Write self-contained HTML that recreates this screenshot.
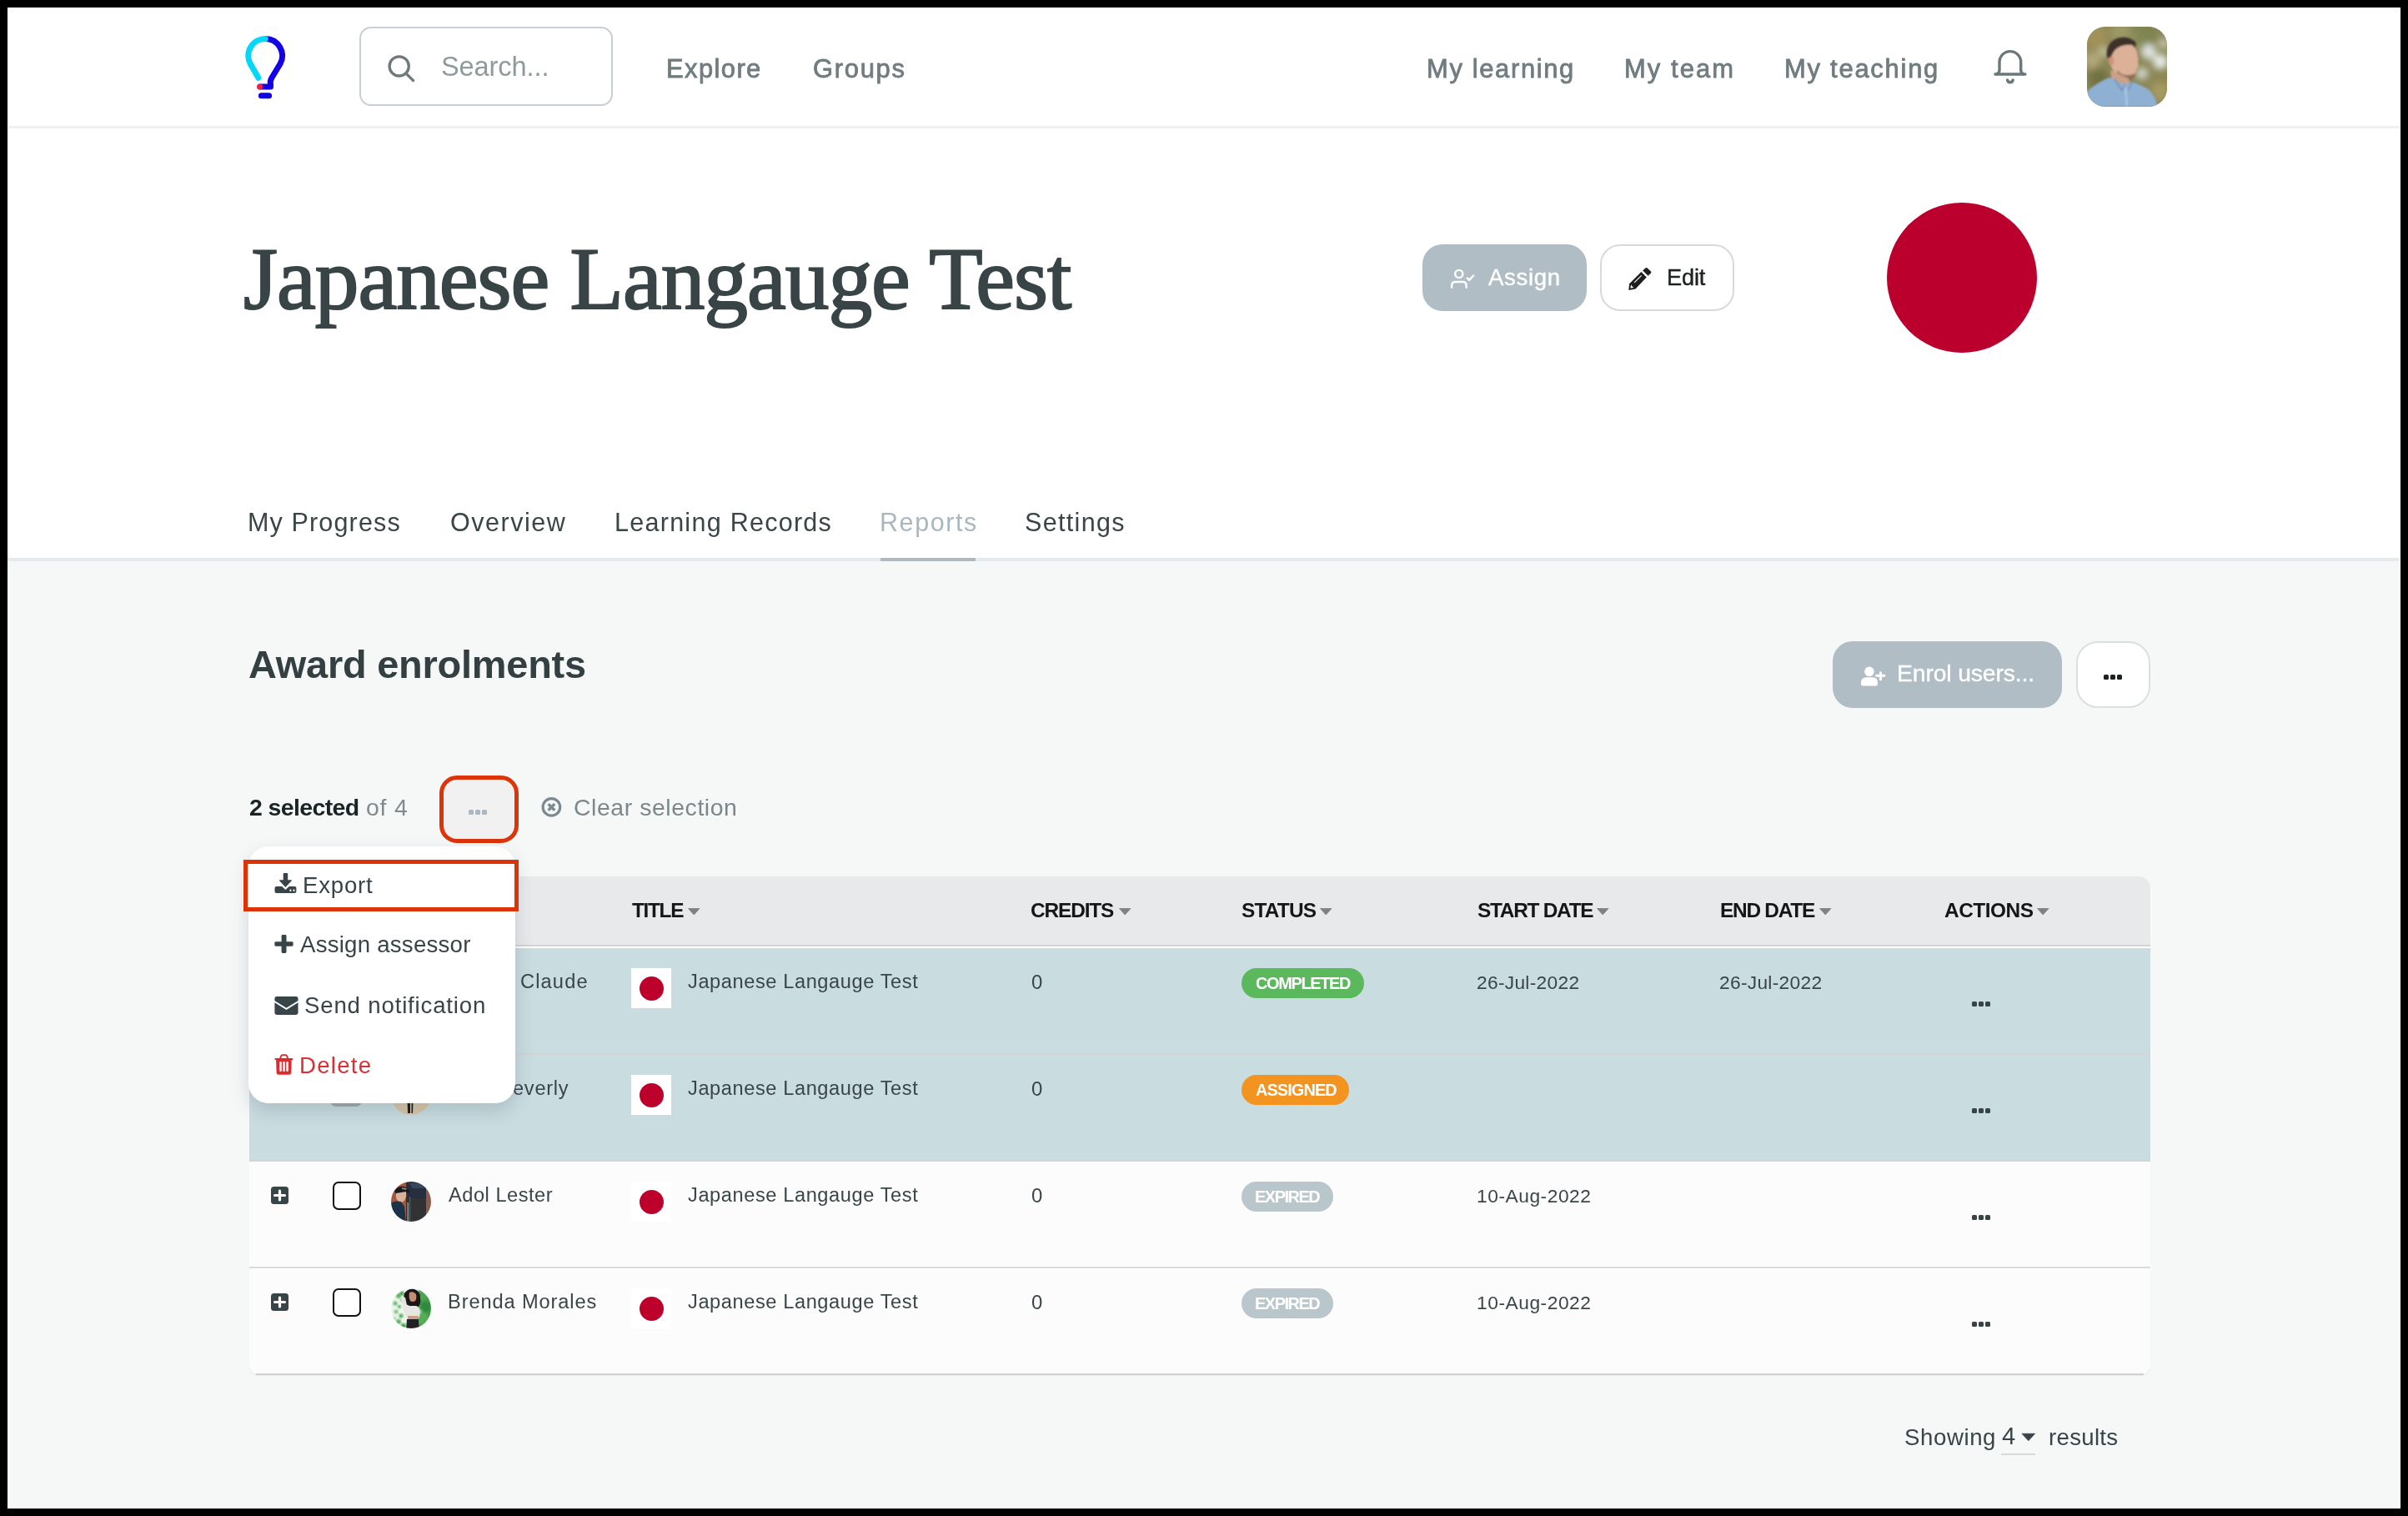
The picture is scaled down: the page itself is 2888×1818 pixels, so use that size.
<!DOCTYPE html>
<html><head><meta charset="utf-8"><title>Japanese Langauge Test - Reports</title>
<style>
html,body{margin:0;padding:0}
body{width:2888px;height:1818px;background:#000;position:relative;overflow:hidden;font-family:'Liberation Sans',sans-serif}
.t{position:absolute;white-space:nowrap;will-change:transform}

</style></head><body>
<div style="position:absolute;left:9px;top:9px;width:2870px;height:1800px;background:#fff"></div>
<div style="position:absolute;left:9px;top:151px;width:2869px;height:3px;background:#eff0f2"></div>
<div style="position:absolute;left:9px;top:669px;width:2869px;height:4px;background:#e4eaed"></div>
<div style="position:absolute;left:9px;top:673px;width:2869px;height:1135px;background:#f6f8f8"></div>
<div style="position:absolute;left:1056px;top:669px;width:114px;height:4px;background:#adbac2"></div>
<svg style="position:absolute;left:284px;top:36px" width="68" height="90" viewBox="0 0 68 90">
<path d="M34.15 10.5 A20.35 20.35 0 0 1 52.07 40.5 L41.8 57.5 Q39.6 61.5 40.5 65 L40.5 68 L28 68" fill="none" stroke="#1400e6" stroke-width="7" stroke-linecap="round" stroke-linejoin="round"/>
<path d="M25.8 57.3 L16.47 40.93 A20.35 20.35 0 0 1 34.15 10.5" fill="none" stroke="#03d7fa" stroke-width="7" stroke-linecap="round"/>
<circle cx="27.6" cy="68.1" r="3.5" fill="#ee2244"/>
<path d="M29.4 78.65 L38.6 78.65" stroke="#1400e6" stroke-width="7" stroke-linecap="round"/>
</svg>
<div style="position:absolute;left:431px;top:32px;width:300px;height:91px;border:2px solid #c9cfd2;border-radius:14px;background:#fff"></div>
<svg style="position:absolute;left:460px;top:60px" width="44" height="44" viewBox="0 0 44 44">
<circle cx="18.7" cy="19.4" r="11.6" fill="none" stroke="#6d797d" stroke-width="3.3"/>
<path d="M27.3 28.3 L35.6 36.6" stroke="#6d797d" stroke-width="3.3" stroke-linecap="round"/></svg>
<div class=t style="left:529.00px;top:64.01px;font:400 32.59px/32.59px 'Liberation Sans',sans-serif;letter-spacing:-0.116px;color:#8f9a9d;">Search...</div>
<div class=t style="left:798.70px;top:67.81px;font:400 30.93px/30.93px 'Liberation Sans',sans-serif;letter-spacing:1.409px;color:#707c80;-webkit-text-stroke:0.8px #707c80">Explore</div>
<div class=t style="left:975.00px;top:67.81px;font:400 30.93px/30.93px 'Liberation Sans',sans-serif;letter-spacing:1.712px;color:#707c80;-webkit-text-stroke:0.8px #707c80">Groups</div>
<div class=t style="left:1711.00px;top:67.81px;font:400 30.93px/30.93px 'Liberation Sans',sans-serif;letter-spacing:1.646px;color:#707c80;-webkit-text-stroke:0.8px #707c80">My learning</div>
<div class=t style="left:1948.30px;top:67.81px;font:400 30.93px/30.93px 'Liberation Sans',sans-serif;letter-spacing:2.067px;color:#707c80;-webkit-text-stroke:0.8px #707c80">My team</div>
<div class=t style="left:2139.70px;top:67.81px;font:400 30.93px/30.93px 'Liberation Sans',sans-serif;letter-spacing:1.758px;color:#707c80;-webkit-text-stroke:0.8px #707c80">My teaching</div>
<svg style="position:absolute;left:2380px;top:50px" width="60" height="60" viewBox="0 0 60 60">
<path d="M14.5 39 Q18 38 18 34 L18 24.5 A12.85 12.85 0 0 1 43.7 24.5 L43.7 34 Q43.7 38 47.2 39" fill="none" stroke="#6b777b" stroke-width="3.4" stroke-linejoin="round"/>
<path d="M12.9 39 L48.9 39" stroke="#6b777b" stroke-width="3.4" stroke-linecap="round"/>
<path d="M27.5 45.9 A3.4 3.4 0 0 0 34.2 45.9" fill="none" stroke="#6b777b" stroke-width="3.4" stroke-linecap="round"/></svg>
<svg style="position:absolute;left:2503px;top:32px" width="96" height="96" viewBox="0 0 96 96">
<defs><clipPath id="av"><rect width="96" height="96" rx="22"/></clipPath>
<filter id="bl" x="-20%" y="-20%" width="140%" height="140%"><feGaussianBlur stdDeviation="4"/></filter>
<filter id="bl2"><feGaussianBlur stdDeviation="0.8"/></filter></defs>
<g clip-path="url(#av)">
<rect width="96" height="96" fill="#8b8656"/>
<g filter="url(#bl)">
<circle cx="10" cy="12" r="14" fill="#a2925a"/><circle cx="40" cy="6" r="12" fill="#9c9a66"/><circle cx="70" cy="10" r="14" fill="#7f8450"/>
<circle cx="6" cy="40" r="10" fill="#b4a878"/><circle cx="14" cy="62" r="12" fill="#6f7242"/><circle cx="20" cy="30" r="6" fill="#c9c4a0"/>
<circle cx="74" cy="30" r="9" fill="#dfe6e4"/><circle cx="88" cy="42" r="9" fill="#e9eeee"/><circle cx="66" cy="56" r="7" fill="#d4dcd6"/><circle cx="92" cy="20" r="6" fill="#c8cdb8"/>
<circle cx="88" cy="78" r="12" fill="#a69a62"/><circle cx="76" cy="90" r="8" fill="#8f8a58"/><circle cx="56" cy="14" r="8" fill="#8a8c5c"/>
</g>
<g filter="url(#bl2)">
<path d="M24 36 Q22 20 36 14 Q48 10 58 18 Q60 24 56 26 Q46 22 40 28 Q34 36 30 44 Z" fill="#3e3129"/>
<path d="M32 30 Q40 20 54 22 Q60 26 61 36 Q62 40 61 44 Q63 48 60 50 Q58 56 56 60 Q50 64 42 62 Q34 58 30 50 Q27 44 28 38 Z" fill="#ddb198"/>
<ellipse cx="29" cy="41" rx="3.5" ry="5" fill="#d0927a"/>
<path d="M36 52 Q44 62 58 56 L56 62 Q48 66 40 62 Q36 58 36 52 Z" fill="#8e6c56"/>
<path d="M28 52 L50 62 L52 70 L30 68 Z" fill="#caa08a"/>
<path d="M0 78 Q8 70 24 62 Q30 60 34 64 Q44 72 54 66 Q64 70 72 74 Q80 80 84 92 L84 96 L0 96 Z" fill="#8eb0d3"/>
<path d="M33 63 L42 76 L46 70 M54 66 L50 76" fill="none" stroke="#6f90b6" stroke-width="1.6"/>
<path d="M46 72 L48 96" stroke="#c6d8ea" stroke-width="1.2"/>
</g>
</g></svg>
<div class=t style="left:292.00px;top:282.39px;font:400 105.34px/105.34px 'Liberation Serif',serif;letter-spacing:-1.006px;color:#384446;-webkit-text-stroke:2px #384446">Japanese Langauge Test</div>
<div style="position:absolute;left:1706px;top:293px;width:197px;height:80px;border-radius:24px;background:#b0bdc5"></div>
<svg style="position:absolute;left:1730px;top:312px" width="50" height="40" viewBox="0 0 50 40">
<circle cx="19.8" cy="16.5" r="4.6" fill="none" stroke="#fff" stroke-width="2.4"/>
<path d="M11.1 33.8 L11.1 30.5 Q11.1 26 15.6 26 L24.1 26 Q28.6 26 28.6 30.5 L28.6 33.8" fill="none" stroke="#fff" stroke-width="2.4"/>
<path d="M29.6 21.4 L32.1 23.9 L37.1 18.5" fill="none" stroke="#fff" stroke-width="2.4" stroke-linecap="round" stroke-linejoin="round"/></svg>
<div class=t style="left:1784.50px;top:318.71px;font:400 27.62px/27.62px 'Liberation Sans',sans-serif;letter-spacing:0.637px;color:#fff;-webkit-text-stroke:0.4px #fff">Assign</div>
<div style="position:absolute;left:1919px;top:293px;width:157px;height:76px;border:2px solid #d7dadc;border-radius:24px;background:#fff"></div>
<svg style="position:absolute;left:1945px;top:312px" width="45" height="45" viewBox="0 0 45 45">
<path d="M23.4 14.1 L29.8 20.5 L16.5 34.6 L8.3 36 L9.2 28.2 Z" fill="#1f1f1f"/>
<path d="M25.2 12.5 L28.7 9.3 Q29.7 8.6 30.7 9.4 L35 13.6 Q35.8 14.5 35 15.5 L31.6 18.8 Z" fill="#1f1f1f"/>
<path d="M15.1 26.9 L23.6 18.3" stroke="#fff" stroke-width="1.2"/>
<path d="M11.2 29.3 L10.4 33.6 L14.6 33 Q13.2 32.6 12.8 31.6 Q12 31.2 11.2 29.3 Z" fill="#fff"/></svg>
<div class=t style="left:1999.00px;top:318.97px;font:400 27.2px/27.2px 'Liberation Sans',sans-serif;letter-spacing:-0.165px;color:#1f2223;-webkit-text-stroke:0.4px #1f2223">Edit</div>
<div style="position:absolute;left:2263px;top:243px;width:180px;height:180px;border-radius:50%;background:#bc002d"></div>
<div class=t style="left:297.40px;top:610.76px;font:400 30.52px/30.52px 'Liberation Sans',sans-serif;letter-spacing:1.139px;color:#3a4548;">My Progress</div>
<div class=t style="left:540.20px;top:610.76px;font:400 30.52px/30.52px 'Liberation Sans',sans-serif;letter-spacing:1.523px;color:#3a4548;">Overview</div>
<div class=t style="left:737.00px;top:610.76px;font:400 30.52px/30.52px 'Liberation Sans',sans-serif;letter-spacing:1.265px;color:#3a4548;">Learning Records</div>
<div class=t style="left:1054.60px;top:610.76px;font:400 30.52px/30.52px 'Liberation Sans',sans-serif;letter-spacing:1.585px;color:#a9b7be;">Reports</div>
<div class=t style="left:1229.20px;top:610.76px;font:400 30.52px/30.52px 'Liberation Sans',sans-serif;letter-spacing:1.314px;color:#3a4548;">Settings</div>
<div class=t style="left:297.80px;top:774.15px;font:700 46.95px/46.95px 'Liberation Sans',sans-serif;letter-spacing:-0.236px;color:#343f42;">Award enrolments</div>
<div style="position:absolute;left:2198px;top:769px;width:275px;height:80px;border-radius:24px;background:#b0bdc5"></div>
<svg style="position:absolute;left:2225px;top:790px" width="45" height="40" viewBox="0 0 45 40">
<circle cx="16.9" cy="15.3" r="5.8" fill="#fff"/>
<path d="M7 30.5 L7 28.5 Q7 22.2 13.5 22.2 L20.5 22.2 Q26.9 22.2 26.9 28.5 L26.9 30.5 Q26.9 32.5 24.9 32.5 L9 32.5 Q7 32.5 7 30.5 Z" fill="#fff"/>
<path d="M30.5 16.7 L30.5 24.9 M25.5 20.3 L35 20.3" stroke="#fff" stroke-width="2.9" stroke-linecap="round"/></svg>
<div class=t style="left:2275.30px;top:793.23px;font:400 28.31px/28.31px 'Liberation Sans',sans-serif;letter-spacing:-0.118px;color:#fff;-webkit-text-stroke:0.4px #fff">Enrol users...</div>
<div style="position:absolute;left:2490px;top:769px;width:85px;height:76px;border:2px solid #dcdfe0;border-radius:26px;background:#fff"></div>
<div style="position:absolute;left:2523px;top:809.2px;width:6px;height:6px;border-radius:1.5px;background:#1f2223"></div><div style="position:absolute;left:2531px;top:809.2px;width:6px;height:6px;border-radius:1.5px;background:#1f2223"></div><div style="position:absolute;left:2539px;top:809.2px;width:6px;height:6px;border-radius:1.5px;background:#1f2223"></div>
<div class=t style="left:299.30px;top:954.12px;font:700 28.44px/28.44px 'Liberation Sans',sans-serif;letter-spacing:-0.596px;color:#1a2326;">2 selected</div>
<div class=t style="left:438.60px;top:954.12px;font:400 28.44px/28.44px 'Liberation Sans',sans-serif;letter-spacing:0.761px;color:#7f8b8f;">of 4</div>
<div style="position:absolute;left:527px;top:930px;width:85px;height:71px;border:5px solid #dd3409;border-radius:21px;background:#f1f1f1"></div>
<div style="position:absolute;left:561.5px;top:970.8px;width:6px;height:6px;border-radius:1.5px;background:#a9b9c2"></div><div style="position:absolute;left:569.5px;top:970.8px;width:6px;height:6px;border-radius:1.5px;background:#a9b9c2"></div><div style="position:absolute;left:577.5px;top:970.8px;width:6px;height:6px;border-radius:1.5px;background:#a9b9c2"></div>
<svg style="position:absolute;left:645px;top:952px" width="32" height="32" viewBox="0 0 32 32">
<circle cx="16.4" cy="15.9" r="10.3" fill="none" stroke="#7a8a93" stroke-width="3.2"/>
<path d="M12.6 12.1 L20.2 19.7 M20.2 12.1 L12.6 19.7" stroke="#7a8a93" stroke-width="3.4"/></svg>
<div class=t style="left:688.40px;top:954.12px;font:400 28.44px/28.44px 'Liberation Sans',sans-serif;letter-spacing:0.559px;color:#7b878b;">Clear selection</div>
<div style="position:absolute;left:299px;top:1051px;width:2280px;height:82px;background:#e8e9eb;border-radius:14px 14px 0 0"></div>
<div style="position:absolute;left:299px;top:1133px;width:2280px;height:2px;background:#d3d4d5"></div>
<div style="position:absolute;left:299px;top:1135px;width:2280px;height:2px;background:#fff"></div>
<div style="position:absolute;left:299px;top:1137px;width:2280px;height:126px;background:#c9dce0;"></div>
<div style="position:absolute;left:299px;top:1263px;width:2280px;height:2px;background:#d2d4d5"></div>
<div style="position:absolute;left:299px;top:1265px;width:2280px;height:126px;background:#c9dce0;"></div>
<div style="position:absolute;left:299px;top:1391px;width:2280px;height:2px;background:#d2d4d5"></div>
<div style="position:absolute;left:299px;top:1393px;width:2280px;height:126px;background:#fcfcfc;"></div>
<div style="position:absolute;left:299px;top:1519px;width:2280px;height:2px;background:#d9dcde"></div>
<div style="position:absolute;left:299px;top:1521px;width:2280px;height:126px;background:#fcfcfc;border-radius:0 0 12px 12px;"></div>
<div style="position:absolute;left:307px;top:1647px;width:2264px;height:2px;background:#d0d1d2"></div>
<div style="position:absolute;left:299px;top:1639px;width:2280px;height:10px;border-radius:0 0 12px 12px;box-shadow:0 1px 1px rgba(0,0,0,0.06)"></div>
<div class=t style="left:757.50px;top:1080.12px;font:700 24.42px/24.42px 'Liberation Sans',sans-serif;letter-spacing:-1.326px;color:#141617;">TITLE</div>
<svg style="position:absolute;left:825px;top:1089px" width="15" height="9" viewBox="0 0 15 9"><path d="M0.5 0.5 L14 0.5 L7.25 8 Z" fill="#808080" stroke="#808080" stroke-width="0.8" stroke-linejoin="round"/></svg>
<div class=t style="left:1236.40px;top:1080.12px;font:700 24.42px/24.42px 'Liberation Sans',sans-serif;letter-spacing:-1.124px;color:#141617;">CREDITS</div>
<svg style="position:absolute;left:1341.5px;top:1089px" width="15" height="9" viewBox="0 0 15 9"><path d="M0.5 0.5 L14 0.5 L7.25 8 Z" fill="#808080" stroke="#808080" stroke-width="0.8" stroke-linejoin="round"/></svg>
<div class=t style="left:1489.40px;top:1080.12px;font:700 24.42px/24.42px 'Liberation Sans',sans-serif;letter-spacing:-0.784px;color:#141617;">STATUS</div>
<svg style="position:absolute;left:1582.5px;top:1089px" width="15" height="9" viewBox="0 0 15 9"><path d="M0.5 0.5 L14 0.5 L7.25 8 Z" fill="#808080" stroke="#808080" stroke-width="0.8" stroke-linejoin="round"/></svg>
<div class=t style="left:1771.50px;top:1080.12px;font:700 24.42px/24.42px 'Liberation Sans',sans-serif;letter-spacing:-1.262px;color:#141617;">START DATE</div>
<svg style="position:absolute;left:1914.5px;top:1089px" width="15" height="9" viewBox="0 0 15 9"><path d="M0.5 0.5 L14 0.5 L7.25 8 Z" fill="#808080" stroke="#808080" stroke-width="0.8" stroke-linejoin="round"/></svg>
<div class=t style="left:2062.80px;top:1080.12px;font:700 24.42px/24.42px 'Liberation Sans',sans-serif;letter-spacing:-1.237px;color:#141617;">END DATE</div>
<svg style="position:absolute;left:2181.5px;top:1089px" width="15" height="9" viewBox="0 0 15 9"><path d="M0.5 0.5 L14 0.5 L7.25 8 Z" fill="#808080" stroke="#808080" stroke-width="0.8" stroke-linejoin="round"/></svg>
<div class=t style="left:2331.50px;top:1080.12px;font:700 24.42px/24.42px 'Liberation Sans',sans-serif;letter-spacing:-0.475px;color:#141617;">ACTIONS</div>
<svg style="position:absolute;left:2443px;top:1089px" width="15" height="9" viewBox="0 0 15 9"><path d="M0.5 0.5 L14 0.5 L7.25 8 Z" fill="#808080" stroke="#808080" stroke-width="0.8" stroke-linejoin="round"/></svg>
<svg style="position:absolute;left:325px;top:1167px" width="21" height="21" viewBox="0 0 21 21"><rect width="21" height="21" rx="3.5" fill="#384548"/><path d="M10.5 5 L10.5 16 M4.5 10.5 L16.5 10.5" stroke="#fff" stroke-width="3.2" stroke-linecap="round"/></svg>
<div style="position:absolute;left:396px;top:1164.5px;width:38px;height:34px;border-radius:7px;background:#a0acb3"></div>
<div style="position:absolute;left:469px;top:1160.5px;width:48px;height:48px;border-radius:50%;background:#c9b79e"></div>
<div class=t style="left:624.00px;top:1166.31px;font:400 23.61px/23.61px 'Liberation Sans',sans-serif;letter-spacing:1.143px;color:#3a4548;">Claude</div>
<div style="position:absolute;left:757px;top:1161px;width:48px;height:48px;background:#fff"></div>
<div style="position:absolute;left:766.5px;top:1170.5px;width:29px;height:29px;border-radius:50%;background:#bd002b"></div>
<div class=t style="left:825.20px;top:1166.31px;font:400 23.61px/23.61px 'Liberation Sans',sans-serif;letter-spacing:0.586px;color:#3a4548;">Japanese Langauge Test</div>
<div class=t style="left:1237.40px;top:1166.00px;font:400 23.98px/23.98px 'Liberation Sans',sans-serif;letter-spacing:0.000px;color:#3a4548;">0</div>
<div style="position:absolute;left:1489px;top:1161px;width:147px;height:36px;border-radius:18px;background:#5cb85c"></div>
<div class=t style="left:1505.60px;top:1170.14px;font:700 19.91px/19.91px 'Liberation Sans',sans-serif;letter-spacing:-1.324px;color:#fff;">COMPLETED</div>
<div class=t style="left:1770.50px;top:1167.01px;font:400 22.78px/22.78px 'Liberation Sans',sans-serif;letter-spacing:0.283px;color:#3a4548;">26-Jul-2022</div>
<div class=t style="left:2061.60px;top:1167.01px;font:400 22.78px/22.78px 'Liberation Sans',sans-serif;letter-spacing:0.283px;color:#3a4548;">26-Jul-2022</div>
<div style="position:absolute;left:2365px;top:1201.2px;width:5.8px;height:5.8px;border-radius:1.5px;background:#384346"></div><div style="position:absolute;left:2373px;top:1201.2px;width:5.8px;height:5.8px;border-radius:1.5px;background:#384346"></div><div style="position:absolute;left:2381px;top:1201.2px;width:5.8px;height:5.8px;border-radius:1.5px;background:#384346"></div>
<svg style="position:absolute;left:325px;top:1295px" width="21" height="21" viewBox="0 0 21 21"><rect width="21" height="21" rx="3.5" fill="#384548"/><path d="M10.5 5 L10.5 16 M4.5 10.5 L16.5 10.5" stroke="#fff" stroke-width="3.2" stroke-linecap="round"/></svg>
<div style="position:absolute;left:396px;top:1292.5px;width:38px;height:34px;border-radius:7px;background:#a0acb3"></div>
<svg style="position:absolute;left:469px;top:1288.5px" width="48" height="48" viewBox="0 0 48 48"><defs><clipPath id="c1"><circle cx="24" cy="24" r="24"/></clipPath></defs><g clip-path="url(#c1)">
<rect width="48" height="48" fill="#d8c6ab"/><path d="M19 14 L27 14 L26 46 L20 46 Z" fill="#1e1e1e"/><rect x="23" y="30" width="1.5" height="16" fill="#d8c6ab"/></g></svg>
<div class=t style="left:615.00px;top:1294.31px;font:400 23.61px/23.61px 'Liberation Sans',sans-serif;letter-spacing:0.725px;color:#3a4548;">everly</div>
<div style="position:absolute;left:757px;top:1289px;width:48px;height:48px;background:#fff"></div>
<div style="position:absolute;left:766.5px;top:1298.5px;width:29px;height:29px;border-radius:50%;background:#bd002b"></div>
<div class=t style="left:825.20px;top:1294.31px;font:400 23.61px/23.61px 'Liberation Sans',sans-serif;letter-spacing:0.586px;color:#3a4548;">Japanese Langauge Test</div>
<div class=t style="left:1237.40px;top:1294.00px;font:400 23.98px/23.98px 'Liberation Sans',sans-serif;letter-spacing:0.000px;color:#3a4548;">0</div>
<div style="position:absolute;left:1489px;top:1289px;width:128.5px;height:36px;border-radius:18px;background:#f39420"></div>
<div class=t style="left:1505.60px;top:1298.14px;font:700 19.91px/19.91px 'Liberation Sans',sans-serif;letter-spacing:-0.900px;color:#fff;">ASSIGNED</div>
<div style="position:absolute;left:2365px;top:1329.2px;width:5.8px;height:5.8px;border-radius:1.5px;background:#384346"></div><div style="position:absolute;left:2373px;top:1329.2px;width:5.8px;height:5.8px;border-radius:1.5px;background:#384346"></div><div style="position:absolute;left:2381px;top:1329.2px;width:5.8px;height:5.8px;border-radius:1.5px;background:#384346"></div>
<svg style="position:absolute;left:325px;top:1423px" width="21" height="21" viewBox="0 0 21 21"><rect width="21" height="21" rx="3.5" fill="#384548"/><path d="M10.5 5 L10.5 16 M4.5 10.5 L16.5 10.5" stroke="#fff" stroke-width="3.2" stroke-linecap="round"/></svg>
<div style="position:absolute;left:399px;top:1417px;width:30px;height:30px;border:2px solid #111;border-radius:7px;background:#fff"></div>
<svg style="position:absolute;left:469px;top:1416.5px" width="48" height="48" viewBox="0 0 48 48"><defs><clipPath id="c2"><circle cx="24" cy="24" r="24"/></clipPath><filter id="b2"><feGaussianBlur stdDeviation="0.7"/></filter></defs><g clip-path="url(#c2)"><g filter="url(#b2)">
<rect x="-2" y="-2" width="52" height="52" fill="#a2583c"/><rect x="40" y="-2" width="10" height="52" fill="#8e5a4a"/>
<path d="M18 -2 L42 -2 L42 50 L18 50 Z" fill="#303236"/><path d="M18 -2 L42 -2 L42 20 L20 20 Z" fill="#262f40"/><path d="M22 2 L36 2 L40 8 L26 8 Z" fill="#34465a"/>
<rect x="19.5" y="25" width="1.6" height="25" fill="#8a989c"/><rect x="22" y="18" width="1.2" height="30" fill="#3a6a78"/>
<path d="M4 11 Q8 5 16 6 Q22 8 22 13 L6 15 Z" fill="#151b24"/><path d="M13 7 L19 8 L18 10 L13 9 Z" fill="#8a8060"/>
<path d="M6 14 L18 12 Q19 17 17 21 Q15 25 11 25 Q7 23 6 19 Z" fill="#d6b39a"/>
<path d="M-2 27 Q4 22 12 24 L16 30 L18 50 L-2 50 Z" fill="#1c3149"/>
</g></g></svg>
<div class=t style="left:537.50px;top:1422.31px;font:400 23.61px/23.61px 'Liberation Sans',sans-serif;letter-spacing:0.513px;color:#3a4548;">Adol Lester</div>
<div style="position:absolute;left:757px;top:1417px;width:48px;height:48px;background:#fff"></div>
<div style="position:absolute;left:766.5px;top:1426.5px;width:29px;height:29px;border-radius:50%;background:#bd002b"></div>
<div class=t style="left:825.20px;top:1422.31px;font:400 23.61px/23.61px 'Liberation Sans',sans-serif;letter-spacing:0.586px;color:#3a4548;">Japanese Langauge Test</div>
<div class=t style="left:1237.40px;top:1422.00px;font:400 23.98px/23.98px 'Liberation Sans',sans-serif;letter-spacing:0.000px;color:#3a4548;">0</div>
<div style="position:absolute;left:1489px;top:1417px;width:109.6px;height:36px;border-radius:18px;background:#b9c7cd"></div>
<div class=t style="left:1504.60px;top:1426.14px;font:700 19.91px/19.91px 'Liberation Sans',sans-serif;letter-spacing:-1.453px;color:#fff;">EXPIRED</div>
<div class=t style="left:1770.50px;top:1423.01px;font:400 22.78px/22.78px 'Liberation Sans',sans-serif;letter-spacing:0.533px;color:#3a4548;">10-Aug-2022</div>
<div style="position:absolute;left:2365px;top:1457.2px;width:5.8px;height:5.8px;border-radius:1.5px;background:#384346"></div><div style="position:absolute;left:2373px;top:1457.2px;width:5.8px;height:5.8px;border-radius:1.5px;background:#384346"></div><div style="position:absolute;left:2381px;top:1457.2px;width:5.8px;height:5.8px;border-radius:1.5px;background:#384346"></div>
<svg style="position:absolute;left:325px;top:1551px" width="21" height="21" viewBox="0 0 21 21"><rect width="21" height="21" rx="3.5" fill="#384548"/><path d="M10.5 5 L10.5 16 M4.5 10.5 L16.5 10.5" stroke="#fff" stroke-width="3.2" stroke-linecap="round"/></svg>
<div style="position:absolute;left:399px;top:1545px;width:30px;height:30px;border:2px solid #111;border-radius:7px;background:#fff"></div>
<svg style="position:absolute;left:469px;top:1544.5px" width="48" height="48" viewBox="0 0 48 48"><defs><clipPath id="c3"><circle cx="24" cy="24" r="24"/></clipPath><filter id="b3"><feGaussianBlur stdDeviation="0.9"/></filter><filter id="b3b"><feGaussianBlur stdDeviation="0.5"/></filter></defs><g clip-path="url(#c3)">
<rect width="48" height="48" fill="#eef5ec"/><g filter="url(#b3)">
<rect x="33" y="0" width="16" height="48" fill="#3f9a48"/><circle cx="38" cy="8" r="6" fill="#4aa652"/><circle cx="42" cy="22" r="6" fill="#2f8a3c"/><circle cx="38" cy="36" r="7" fill="#56ad58"/><circle cx="44" cy="44" r="5" fill="#3a9444"/><circle cx="34" cy="28" r="3" fill="#8cc884"/>
<circle cx="9" cy="9" r="3" fill="#5db35f"/><circle cx="13" cy="6" r="2.5" fill="#3f9e4a"/><circle cx="5" cy="18" r="2.5" fill="#62b664"/><circle cx="10" cy="22" r="2" fill="#4aa652"/><circle cx="6" cy="28" r="2.5" fill="#78c272"/><circle cx="12" cy="33" r="2.5" fill="#4ea852"/><circle cx="9" cy="40" r="3" fill="#58ae5a"/><circle cx="15" cy="45" r="3" fill="#3f9e4a"/><circle cx="13" cy="14" r="2" fill="#7cc276"/><circle cx="4" cy="36" r="2" fill="#9ad090"/></g>
<g filter="url(#b3b)"><path d="M16 6 Q20 0 28 1 Q36 4 35 12 Q36 18 33 22 L31 24 L20 24 Q17 21 18 16 Q14 11 16 6 Z" fill="#1d1715"/><path d="M22 5 Q27 3 30 7 Q31 12 29 15 Q26 17 23 15 Q21 11 22 5 Z" fill="#c48d74"/>
<path d="M12 12 Q14 9 17 11 L19 20 L14 22 Z" fill="#e2e2de"/>
<path d="M14 20 Q18 18 22 21 L30 21 Q34 22 35 28 L34 35 L19 36 Q15 30 14 20 Z" fill="#e6e6e2"/><rect x="20" y="33" width="13" height="4" fill="#cf9f86"/><path d="M19 37 L33 37 L34 50 L18 50 Z" fill="#222226"/></g></g></svg>
<div class=t style="left:536.50px;top:1550.31px;font:400 23.61px/23.61px 'Liberation Sans',sans-serif;letter-spacing:0.896px;color:#3a4548;">Brenda Morales</div>
<div style="position:absolute;left:757px;top:1545px;width:48px;height:48px;background:#fff"></div>
<div style="position:absolute;left:766.5px;top:1554.5px;width:29px;height:29px;border-radius:50%;background:#bd002b"></div>
<div class=t style="left:825.20px;top:1550.31px;font:400 23.61px/23.61px 'Liberation Sans',sans-serif;letter-spacing:0.586px;color:#3a4548;">Japanese Langauge Test</div>
<div class=t style="left:1237.40px;top:1550.00px;font:400 23.98px/23.98px 'Liberation Sans',sans-serif;letter-spacing:0.000px;color:#3a4548;">0</div>
<div style="position:absolute;left:1489px;top:1545px;width:109.6px;height:36px;border-radius:18px;background:#b9c7cd"></div>
<div class=t style="left:1504.60px;top:1554.14px;font:700 19.91px/19.91px 'Liberation Sans',sans-serif;letter-spacing:-1.453px;color:#fff;">EXPIRED</div>
<div class=t style="left:1770.50px;top:1551.01px;font:400 22.78px/22.78px 'Liberation Sans',sans-serif;letter-spacing:0.533px;color:#3a4548;">10-Aug-2022</div>
<div style="position:absolute;left:2365px;top:1585.2px;width:5.8px;height:5.8px;border-radius:1.5px;background:#384346"></div><div style="position:absolute;left:2373px;top:1585.2px;width:5.8px;height:5.8px;border-radius:1.5px;background:#384346"></div><div style="position:absolute;left:2381px;top:1585.2px;width:5.8px;height:5.8px;border-radius:1.5px;background:#384346"></div>
<div style="position:absolute;left:298px;top:1014.6px;width:320px;height:308.4px;border-radius:24px;background:#fff;box-shadow:0 9px 22px rgba(30,50,60,0.17)"></div>
<div style="position:absolute;left:292px;top:1031px;width:320px;height:52px;border:5px solid #dc3409"></div>
<svg style="position:absolute;left:322px;top:1040px" width="40" height="40" viewBox="0 0 40 40">
<path d="M17.7 8 Q17.7 7.1 18.6 7.1 L22.3 7.1 Q23.2 7.1 23.2 8 L23.2 15.3 L27.4 15.3 Q28.4 15.5 27.7 16.3 L20.4 23.9 L13.2 16.3 Q12.5 15.5 13.5 15.3 L17.7 15.3 Z" fill="#384548"/>
<path d="M9.5 23 L16.1 23 L20.4 27 L24.8 23 L31.4 23 Q33.4 23 33.4 25 L33.4 28.9 Q33.4 30.9 31.4 30.9 L9.5 30.9 Q7.5 30.9 7.5 28.9 L7.5 25 Q7.5 23 9.5 23 Z" fill="#384548"/>
<rect x="25.5" y="26.6" width="1.8" height="2.4" rx="0.6" fill="#fff"/><rect x="29.6" y="26.6" width="1.8" height="2.4" rx="0.6" fill="#fff"/></svg>
<div class=t style="left:362.80px;top:1047.91px;font:400 27.62px/27.62px 'Liberation Sans',sans-serif;letter-spacing:0.775px;color:#384548;">Export</div>
<svg style="position:absolute;left:322px;top:1112px" width="40" height="40" viewBox="0 0 40 40">
<rect x="15.6" y="9" width="5.9" height="21.9" rx="1.4" fill="#384548"/><rect x="7.4" y="17.2" width="22.2" height="5.5" rx="1.4" fill="#384548"/></svg>
<div class=t style="left:360.30px;top:1119.21px;font:400 27.62px/27.62px 'Liberation Sans',sans-serif;letter-spacing:0.241px;color:#384548;">Assign assessor</div>
<svg style="position:absolute;left:322px;top:1188px" width="40" height="40" viewBox="0 0 40 40">
<rect x="7.4" y="7" width="28.1" height="21.9" rx="2.4" fill="#384548"/>
<path d="M5.5 12 L21.45 21.9 L37.4 12" fill="none" stroke="#fff" stroke-width="1.9"/></svg>
<div class=t style="left:365.30px;top:1191.91px;font:400 27.62px/27.62px 'Liberation Sans',sans-serif;letter-spacing:0.826px;color:#384548;">Send notification</div>
<svg style="position:absolute;left:322px;top:1258px" width="40" height="40" viewBox="0 0 40 40">
<path d="M13.8 12 L15.2 8.2 Q15.5 7.3 16.5 7.3 L20.7 7.3 Q21.7 7.3 22 8.2 L23.4 12" fill="none" stroke="#dc2b2f" stroke-width="1.9"/>
<rect x="7.4" y="11" width="22" height="2" rx="1" fill="#dc2b2f"/>
<path d="M9.1 12.9 L27.7 12.9 L27.2 28.2 Q27.1 30.7 24.6 30.7 L12.2 30.7 Q9.7 30.7 9.6 28.2 Z" fill="#dc2b2f"/>
<rect x="13.2" y="14.9" width="2.6" height="12.1" rx="1.2" fill="#fff"/><rect x="17.2" y="14.9" width="2.6" height="12.1" rx="1.2" fill="#fff"/><rect x="21.2" y="14.9" width="2.6" height="12.1" rx="1.2" fill="#fff"/></svg>
<div class=t style="left:358.70px;top:1263.61px;font:400 27.62px/27.62px 'Liberation Sans',sans-serif;letter-spacing:1.269px;color:#dc2f35;">Delete</div>
<div class=t style="left:2283.50px;top:1709.61px;font:400 27.62px/27.62px 'Liberation Sans',sans-serif;letter-spacing:0.591px;color:#384548;">Showing</div>
<div class=t style="left:2401.00px;top:1708.39px;font:400 29.07px/29.07px 'Liberation Sans',sans-serif;letter-spacing:0.000px;color:#384548;">4</div>
<svg style="position:absolute;left:2424px;top:1718px" width="18" height="11" viewBox="0 0 18 11"><path d="M1 1.3 L16.6 1.3 L8.8 9.7 Z" fill="#384548" stroke="#384548" stroke-width="0.8" stroke-linejoin="round"/></svg>
<div style="position:absolute;left:2400px;top:1743px;width:41px;height:2px;background:#d7dbdc"></div>
<div class=t style="left:2456.50px;top:1709.61px;font:400 27.62px/27.62px 'Liberation Sans',sans-serif;letter-spacing:0.298px;color:#384548;">results</div></body></html>
